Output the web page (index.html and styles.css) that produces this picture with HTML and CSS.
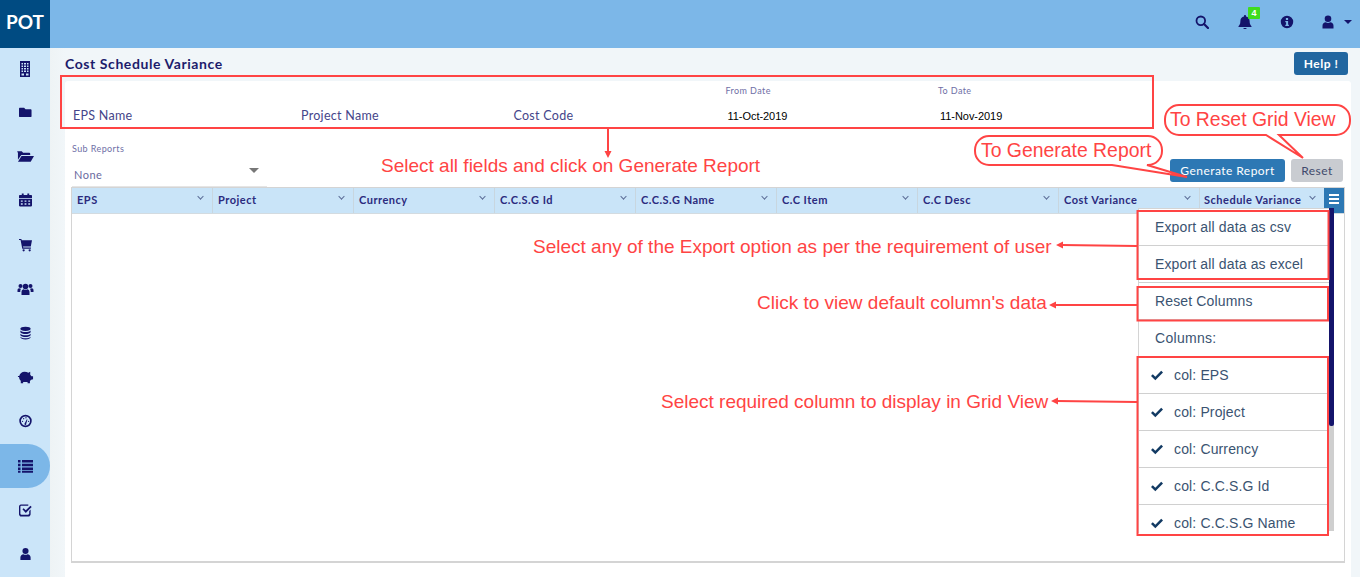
FILE: index.html
```html
<!DOCTYPE html>
<html lang="en">
<head>
<meta charset="utf-8">
<title>Cost Schedule Variance</title>
<link rel="stylesheet" href="styles.css">
</head>
<body>
<header class="topbar">
  <div class="logo">POT</div>
  <div class="top-actions">
    <svg class="ti ti-search" viewBox="0 0 14 14"><circle cx="5.8" cy="5.8" r="4.3" fill="none" stroke="currentColor" stroke-width="1.8"/><path d="M9 9l4 4" stroke="currentColor" stroke-width="2.2" stroke-linecap="round"/></svg>
    <span class="bell-wrap">
      <svg class="ti" viewBox="0 0 14 14"><path d="M7 0c.6 0 1 .4 1 1v.6c2.2.4 3.6 2.2 3.6 4.4 0 3.4 1.2 4.4 1.9 5.2v.8H.5v-.8C1.200 10.400 2.400 9.400 2.400 6c0-2.200 1.400-4 3.600-4.400V1c0-.6.4-1 1-1zM5.300 13h3.400c0 .6-.8 1-1.700 1s-1.700-.4-1.700-1z" fill="currentColor"/></svg>
      <span class="badge">4</span>
    </span>
    <svg class="ti ti-info" viewBox="0 0 14 14"><path fill-rule="evenodd" d="M7 .8a6.200 6.200 0 1 0 0 12.400A6.200 6.200 0 0 0 7 .8zM5.900 3h2.200v1.900H5.900zM5.300 6h2.800v3.700h.8V11H5.300V9.700h.8V7.300h-.8z" fill="currentColor"/></svg>
    <span class="user-wrap">
      <svg class="ti" viewBox="0 0 14 14"><circle cx="7" cy="3.800" r="3.300" fill="currentColor"/><path d="M1.500 13.500v-2.700C1.500 8.700 3 7.300 4.800 7.300c.7.400 1.400.6 2.200.6s1.500-.2 2.200-.6c1.800 0 3.300 1.400 3.300 3.500v2.700z" fill="currentColor"/></svg>
      <span class="caret"></span>
    </span>
  </div>
</header>

<div class="shell">
  <nav class="sidebar">
    <a class="nav-item"><svg class="ni ni-tall" viewBox="0 0 12 16"><path fill-rule="evenodd" d="M1 0h10v16H1zM2.500 2v1.500h1.500V2zM5 2v1.500h2V2zM8 2v1.500h1.500V2zM2.500 4.500V6h1.500V4.500zM5 4.500V6h2V4.500zM8 4.500V6h1.500V4.500zM2.500 7v1.500h1.500V7zM5 7v1.500h2V7zM8 7v1.500h1.500V7zM2.500 9.500V11h1.500V9.500zM5 9.500V11h2V9.500zM8 9.500V11h1.500V9.500zM2.500 12.500V14.500h2.500V12.500zM7 12.500V14.500h2.500V12.500z"/></svg></a>
    <a class="nav-item"><svg class="ni" viewBox="0 0 14 14"><path d="M1 2.500h4.500L7 4h5.500c.5 0 1 .4 1 1v6.500c0 .5-.5 1-1 1H1c-.5 0-1-.5-1-1v-8c0-.5.5-1 1-1z"/></svg></a>
    <a class="nav-item"><svg class="ni ni-wide" viewBox="0 0 18 14"><path d="M0 3c0-.6.4-1 1-1h4l1.500 1.500H13c.6 0 1 .4 1 1V6H4.500L1 11V3zM4.800 7H18l-3.500 6H1z"/></svg></a>
    <a class="nav-item"><svg class="ni" viewBox="0 0 14 14"><path fill-rule="evenodd" d="M3 0h2v1.500h4V0h2v1.500h2c.5 0 1 .5 1 1V5H0V2.500c0-.5.5-1 1-1h2zM0 6h14v7c0 .5-.5 1-1 1H1c-.5 0-1-.5-1-1zM2 7.500V9h2V7.500zM6 7.500V9h2V7.500zM10 7.500V9h2V7.500zM2 10.500V12h2v-1.500zM6 10.500V12h2v-1.500zM10 10.500V12h2v-1.500z"/></svg></a>
    <a class="nav-item"><svg class="ni" viewBox="0 0 14 14"><path d="M0 .5h2.500l.5 1.500h11l-1.300 6.500H4.300l.3 1.300h8.200v1.200H3.500L1.700 1.700H0z"/><circle cx="5" cy="12.700" r="1.200"/><circle cx="11.500" cy="12.700" r="1.200"/></svg></a>
    <a class="nav-item"><svg class="ni ni-wide" viewBox="0 0 16 14"><circle cx="3" cy="4" r="2"/><circle cx="13" cy="4" r="2"/><circle cx="8" cy="4.500" r="2.800"/><path d="M4 13V10c0-1.700 1.200-2.700 2.200-2.700.6.400 1.200.5 1.800.5s1.200-.1 1.800-.5c1 0 2.200 1 2.200 2.700v3z"/><path d="M0 10V8c0-.9.700-1.800 1.700-1.800.4.300.9.500 1.400.5.300 0 .5 0 .7-.1-.6.700-1 1.500-1 2.900V10zM16 10V8c0-.9-.7-1.800-1.700-1.800-.4.300-.9.500-1.400.5-.3 0-.5 0-.7-.1.600.7 1 1.500 1 2.900V10z"/></svg></a>
    <a class="nav-item"><svg class="ni" viewBox="0 0 14 14"><ellipse cx="7" cy="2.500" rx="5.500" ry="2.300"/><path d="M1.500 4.300c1 1.200 3.200 1.700 5.500 1.700s4.500-.5 5.500-1.700V6.300c-.6 1.200-3 1.900-5.500 1.900s-4.900-.7-5.500-1.900zM1.500 7.800c1 1.200 3.200 1.700 5.500 1.700s4.500-.5 5.500-1.700V9.500c-.6 1.200-3 1.900-5.500 1.900s-4.900-.7-5.500-1.900zM1.500 11c1 1.100 3.200 1.600 5.500 1.600s4.500-.5 5.500-1.600v.7C12.500 13 10 14 7 14s-5.500-1-5.500-2.300z"/></svg></a>
    <a class="nav-item"><svg class="ni ni-wide" viewBox="0 0 18 14"><path d="M8 1.500c1.500 0 2.900.4 4 1.100L14 1.500v3l1.300 1.800H17V9.500l-2 .5-1.300 1.300V13.500h-2.500V12.300H6.500v1.200H4v-2.500C2.800 10 2.200 8.600 2.200 7H1V6h1.400C3 3.300 5.200 1.500 8 1.500z"/></svg></a>
    <a class="nav-item"><svg class="ni" viewBox="0 0 14 14"><circle cx="7" cy="7" r="5.800" fill="none" stroke="currentColor" stroke-width="1.800"/><path d="M6.200 9.500L8.500 5l.6.300L7.800 10a1 1 0 1 1-1.600-.5z"/><circle cx="3.800" cy="7.300" r=".7"/><circle cx="5" cy="4.500" r=".7"/><circle cx="7.500" cy="3.500" r=".7"/><circle cx="10.300" cy="7.300" r=".7"/></svg></a>
    <a class="nav-item active"><svg class="ni ni-wide" viewBox="0 0 15 14"><path d="M0 1h2.500v2.500H0zM4 1h11v2.500H4zM0 4.700h2.500v2.500H0zM4 4.700h11v2.500H4zM0 8.400h2.500v2.500H0zM4 8.400h11v2.500H4zM0 11.800h2.500v2H0zM4 11.800h11v2H4z"/></svg></a>
    <a class="nav-item"><svg class="ni" viewBox="0 0 14 14"><path d="M2 1h8v1.500H2.500c-.5 0-1 .5-1 1v7.500c0 .5.500 1 1 1H10c.5 0 1-.5 1-1V8l1.500-1.500V11.500c0 1.300-1 2.500-2.500 2.500H2.500C1 14 0 12.800 0 11.500V3.500C0 2 1 1 2 1z"/><path d="M3.700 6.300L5 5l2.300 2.300L12.300 2.300 13.700 3.700 7.300 10.100z"/></svg></a>
    <a class="nav-item"><svg class="ni" viewBox="0 0 14 14"><circle cx="7" cy="3.800" r="3.300"/><path d="M1.500 13.500v-2.700C1.500 8.700 3 7.300 4.800 7.300c.7.400 1.400.6 2.200.6s1.500-.2 2.200-.6c1.800 0 3.300 1.400 3.300 3.500v2.700z"/></svg></a>
  </nav>

  <main class="content">
    <div class="title-row">
      <h1 class="page-title">Cost Schedule Variance</h1>
      <button class="btn-help">Help !</button>
    </div>
    <section class="card">
      <div class="fields">
        <div class="field"><span class="field-small"></span><span class="field-label">EPS Name</span></div>
        <div class="field"><span class="field-small"></span><span class="field-label">Project Name</span></div>
        <div class="field"><span class="field-small"></span><span class="field-label">Cost Code</span></div>
        <div class="field"><span class="field-small">From Date</span><span class="field-date">11-Oct-2019</span></div>
        <div class="field"><span class="field-small">To Date</span><span class="field-date">11-Nov-2019</span></div>
      </div>
      <div class="action-row">
        <div class="sub-select">
          <span class="sub-label">Sub Reports</span>
          <div class="sub-value"><span>None</span><span class="sub-caret"></span></div>
        </div>
        <div class="buttons">
          <button class="btn btn-primary">Generate Report</button>
          <button class="btn btn-muted">Reset</button>
        </div>
      </div>
      <div class="grid">
        <div class="grid-head">
          <div class="col">EPS<i class="chev"></i></div>
          <div class="col">Project<i class="chev"></i></div>
          <div class="col">Currency<i class="chev"></i></div>
          <div class="col">C.C.S.G Id<i class="chev"></i></div>
          <div class="col">C.C.S.G Name<i class="chev"></i></div>
          <div class="col">C.C Item<i class="chev"></i></div>
          <div class="col">C.C Desc<i class="chev"></i></div>
          <div class="col">Cost Variance<i class="chev"></i></div>
          <div class="col col-last">Schedule Variance<i class="chev"></i></div>
          <button class="grid-menu-btn"><span></span><span></span><span></span></button>
        </div>
        <div class="menu">
          <ul class="menu-list">
            <li class="menu-item">Export all data as csv</li>
            <li class="menu-item">Export all data as excel</li>
            <li class="menu-item">Reset Columns</li>
            <li class="menu-item menu-heading">Columns:</li>
            <li class="menu-item menu-check"><svg class="tick" viewBox="0 0 14 11"><path d="M1 6l1.800-1.800L5.300 6.700 11.200.8 13 2.600 5.300 10.300z"/></svg>col: EPS</li>
            <li class="menu-item menu-check"><svg class="tick" viewBox="0 0 14 11"><path d="M1 6l1.800-1.800L5.300 6.700 11.200.8 13 2.600 5.300 10.300z"/></svg>col: Project</li>
            <li class="menu-item menu-check"><svg class="tick" viewBox="0 0 14 11"><path d="M1 6l1.800-1.800L5.300 6.700 11.200.8 13 2.600 5.300 10.300z"/></svg>col: Currency</li>
            <li class="menu-item menu-check"><svg class="tick" viewBox="0 0 14 11"><path d="M1 6l1.800-1.800L5.300 6.700 11.200.8 13 2.600 5.300 10.300z"/></svg>col: C.C.S.G Id</li>
            <li class="menu-item menu-check"><svg class="tick" viewBox="0 0 14 11"><path d="M1 6l1.800-1.800L5.300 6.700 11.200.8 13 2.600 5.300 10.300z"/></svg>col: C.C.S.G Name</li>
          </ul>
          <div class="menu-scroll"><div class="menu-thumb"></div></div>
        </div>
      </div>
    </section>
  </main>
</div>

<svg class="marks" viewBox="0 0 1360 577" width="1360" height="577">
  <g class="mark-line">
    <rect x="61" y="76" width="1092" height="52"/>
    <rect x="1137.500" y="211" width="191" height="68"/>
    <rect x="1137.500" y="287" width="190.500" height="33.500"/>
    <rect x="1137.500" y="357" width="190.500" height="178"/>
    <path d="M608 128V152M1137 246L1062 245M1137 305L1055 305M1137 402L1057 401"/>
  </g>
  <g class="mark-head">
    <path d="M604.500 151L611.500 151L608 158zM1063 241.500L1063 248.500L1056 245zM1056 301.500L1056 308.500L1049 305zM1058 397.500L1058 404.500L1051 401z"/>
  </g>
  <g class="mark-call">
    <path d="M1179 105H1336a14 14 0 0 1 14 14V121a14 14 0 0 1-14 14H1279L1303 158L1266 135H1179a14 14 0 0 1-14-14V119a14 14 0 0 1 14-14z"/>
    <path d="M989 136H1148a14 14 0 0 1 14 14V151a14 14 0 0 1-14 14H1147L1187 177L1112 165H989a14 14 0 0 1-14-14V150a14 14 0 0 1 14-14z"/>
  </g>
</svg>
<span class="note note-fields">Select all fields and click on Generate Report</span>
<span class="note note-export">Select any of the Export option as per the requirement of user</span>
<span class="note note-reset">Click to view default column's data</span>
<span class="note note-cols">Select required column to display in Grid View</span>
<span class="note note-gen">To Generate Report</span>
<span class="note note-grid">To Reset Grid View</span>
</body>
</html>
```
FILE: styles.css
```css
* { box-sizing: border-box; }
html, body { margin: 0; padding: 0; height: 577px; overflow: hidden; }
body { font-family: Lato, "Open Sans", sans-serif; background: #f1f6f9; position: relative; width: 1360px; }

.topbar { height: 48px; background: #7cb7e8; display: flex; align-items: center; justify-content: space-between; }
.logo { width: 50px; height: 48px; background: #004b82; color: #fff; font-weight: 700; font-size: 19px; line-height: 43px; text-align: center; }
.top-actions { display: flex; align-items: center; color: #14146b; padding-right: 8px; height: 100%; margin-top: -4px; }
.ti { width: 14px; height: 14px; display: block; }
.ti-search { margin-right: 29px; }
.ti-info { margin-right: 27px; }
.bell-wrap { position: relative; display: block; margin-right: 28px; }
.badge { position: absolute; left: 10px; top: -8px; width: 12px; height: 12px; background: #3fdc1f; color: #fff; font: 700 9px/12px "Liberation Sans", sans-serif; text-align: center; border-radius: 1px; }
.user-wrap { display: flex; align-items: center; gap: 9px; }
.caret { width: 0; height: 0; border-left: 4px solid transparent; border-right: 4px solid transparent; border-top: 4px solid #14146b; }

.shell { display: flex; height: 529px; }
.sidebar { width: 50px; background: #cbe5f9; flex: none; display: flex; flex-direction: column; }
.nav-item { height: 44.200px; flex: none; display: flex; align-items: center; justify-content: center; color: #14146b; }
.nav-item:first-child { height: 42px; }
.nav-item.active { background: #7cb7e8; border-radius: 0 22px 22px 0; }
.ni { width: 13px; height: 14px; fill: currentColor; display: block; }
.ni-wide { width: 17px; height: 14px; }
.ni-tall { width: 12px; height: 16px; }

.content { flex: 1; padding: 0 9px 0 15px; min-width: 0; background: linear-gradient(90deg, #eef3f5, #f1f6f9 15px); }
.title-row { height: 33px; display: flex; justify-content: space-between; align-items: flex-start; }
.page-title { margin: 7px 0 0; font-size: 14px; line-height: 17px; font-weight: 700; color: #1c1c6c; letter-spacing: .58px; }
.btn-help { margin: 4px 3px 0 0; width: 54px; height: 23px; border: 0; border-radius: 3px; background: #2166a0; color: #fff; font: 700 12px/23px Lato, sans-serif; letter-spacing: .5px; padding: 0; }

.card { background: #fff; height: 520px; padding: 0 6px; border-radius: 3px 3px 0 0; }
.fields { display: grid; grid-template-columns: 228px 212.500px 212px 212.500px 200px; padding: 3px 0 0 2px; height: 46px; }
.field { display: flex; flex-direction: column; }
.field-small { height: 14px; font-size: 9px; line-height: 14px; color: #6f6fa6; letter-spacing: .4px; }
.field-label { margin-top: 10px; font-size: 12.500px; line-height: 16px; color: #45458a; letter-spacing: .28px; }
.field-date { margin: 10px 0 0 2px; font: 11px/16px "Liberation Sans", sans-serif; color: #000; letter-spacing: -.05px; }

.action-row { height: 60px; display: flex; justify-content: space-between; align-items: flex-start; }
.sub-select { width: 195px; margin-left: 1px; position: relative; }
.sub-label { display: block; margin-top: 16px; font-size: 9px; line-height: 12px; color: #6f6fa6; letter-spacing: .4px; }
.sub-value { margin-top: 4px; height: 29px; padding: 3px 8px 0 2px; display: flex; justify-content: space-between; align-items: center; font-size: 11px; letter-spacing: .5px; color: #6a6aa0; border-bottom: 2px solid #e5e5e5; }
.sub-caret { width: 0; height: 0; border-left: 5px solid transparent; border-right: 5px solid transparent; border-top: 5px solid #777; margin-top: -7px; }
.buttons { display: flex; gap: 6px; margin: 32px 2px 0 0; }
.btn { height: 23px; border: 0; border-radius: 3px; font: 400 12px/23px Lato, sans-serif; letter-spacing: .45px; padding: 0; }
.btn-primary { width: 115px; background: #2d78b4; color: #fff; }
.btn-muted { width: 52px; background: #c9ccd1; color: #3f4a6b; }

.grid { position: relative; height: 376px; border: 1px solid #d4d4d4; border-bottom-width: 2px; background: #fff; }
.grid-head { height: 26px; display: flex; background: #c9e4f8; border-bottom: 1px solid #d3dbe0; position: relative; }
.col { width: 141px; flex: none; padding-left: 5px; border-right: 1px solid #c8d6df; font-size: 11px; line-height: 23px; font-weight: 700; color: #2b2b7e; letter-spacing: .5px; position: relative; }
.col-last { width: 124px; padding-left: 4px; border-right: 0; }
.chev { position: absolute; right: 9px; top: 6px; width: 5px; height: 5px; border-right: 1px solid #5a6a95; border-bottom: 1px solid #5a6a95; transform: rotate(45deg) scale(.9); }
.grid-menu-btn { flex: 1; border: 0; background: #2d78b4; padding: 6px 4px 0; display: flex; flex-direction: column; align-items: center; gap: 2px; height: 25px; }
.grid-menu-btn span { display: block; width: 10px; height: 2px; background: #fff; flex: none; }

.menu { position: absolute; left: 1066px; top: 20px; width: 196px; height: 325px; display: flex; background: #fff; }
.menu-list { list-style: none; margin: 0; padding: 0; width: 191px; height: 325px; overflow: hidden; border-left: 1px solid #d4d4d4; border-top: 1px solid #d4d4d4; }
.menu-item { height: 37px; padding: 1px 0 0 16px; border-bottom: 1px solid #d0d0d0; font: 14px/35px "Liberation Sans", sans-serif; letter-spacing: .14px; color: #3a5371; }
.menu-heading { letter-spacing: .3px; }
.menu-check { display: flex; align-items: center; padding: 0 0 0 11px; gap: 10px; }
.tick { width: 14px; height: 11px; fill: #123a63; flex: none; }
.menu-scroll { width: 5px; height: 323px; background: #cfcfcf; }
.menu-thumb { width: 5px; height: 218px; background: #14146b; border-radius: 0 0 2px 2px; }

.marks { position: absolute; left: 0; top: 0; pointer-events: none; }
.mark-line { fill: none; stroke: #ff4444; stroke-width: 2; }
.mark-head { fill: #ff4444; }
.mark-call { fill: #fff; stroke: #ff4444; stroke-width: 2; }

.note { position: absolute; font-family: "Liberation Sans", sans-serif; color: #ff4444; white-space: nowrap; font-size: 19px; line-height: 22px; }
.note-fields { left: 381px; top: 155px; }
.note-export { left: 533px; top: 236px; }
.note-reset { left: 757px; top: 292px; }
.note-cols { left: 661px; top: 391px; }
.note-gen { left: 981px; top: 139px; font-size: 19.400px; }
.note-grid { left: 1170px; top: 108px; font-size: 19.400px; }
```
